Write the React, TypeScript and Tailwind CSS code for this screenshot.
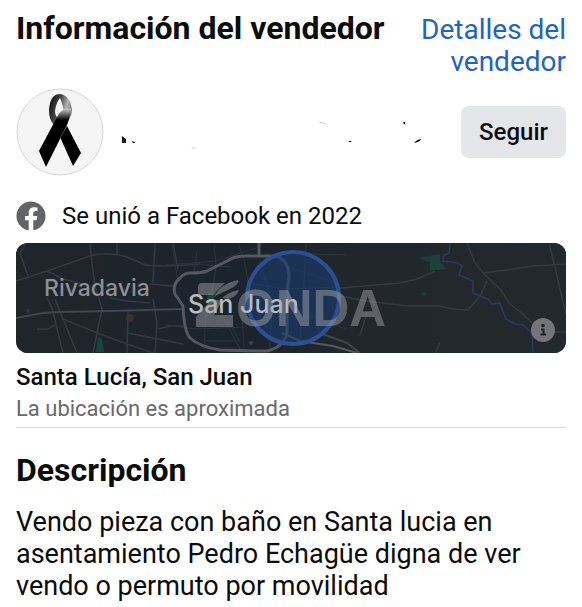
import type React from "react"
import { FaFacebook } from "react-icons/fa"

const minorRoads = [
  "M10 0L4 10L12 33",
  "M0 38L31 28L47 36L70 42",
  "M31 28L51 21L74 13Q89 8 111 14L127 21Q137 25 184 21",
  "M74 0L76 20L79 43L86 66L81 90L77 110",
  "M101 0V11",
  "M139 0L137 40",
  "M157 0L162 26",
  "M31 55L36 65L47 110",
  "M39 56L47 76L61 110",
  "M47 76L84 91L111 101L137 110",
  "M21 86L32 86L39 82",
  "M137 56L141 80L139 110",
  "M112 68L111 110",
  "M112 90L127 93L167 101",
  "M142 86L154 83H170",
  "M94 55L111 58L134 60",
  "M134 41L157 43",
  "M344 93L351 70",
  "M324 45L384 40L401 36L419 28",
  "M324 53L350 58L391 63H424L436 66L452 67L464 53L471 38",
  "M451 0L459 20L467 30L484 46L494 61L507 71L516 80",
  "M467 30L491 27L517 23L550 21",
  "M533 0L541 33L550 72",
  "M424 100L419 110",
  "M538 89H550",
]

const cityStreets = [
  "M156 0L162 40",
  "M181 8L178 32",
  "M198 0L200 24L196 50",
  "M222 0L228 16L236 60",
  "M164 20L215 24",
  "M150 22L200 18L240 5",
  "M150 82L180 86L230 84",
  "M190 68L188 106",
  "M204 66L212 84L224 106",
  "M226 70L228 106",
  "M188 98H224L212 78",
  "M243 16L256 60L254 106",
  "M232 40L270 46L324 44",
  "M260 20L320 40",
  "M290 0L288 40L284 96",
  "M270 10L330 12",
  "M240 74L300 74L330 86",
  "M304 50L302 90",
]

const VendorMap: React.FC = () => (
  <svg
    viewBox="0 0 550 110"
    preserveAspectRatio="xMidYMid slice"
    className="block h-auto w-full rounded-xl bg-[#20262b]"
    role="img"
    aria-label="Mapa de San Juan"
  >
    <defs>
      <linearGradient id="land" x1="0" x2="1">
        <stop offset="0" stopColor="#20252a" />
        <stop offset="0.4" stopColor="#1b232c" />
        <stop offset="0.65" stopColor="#22272b" />
        <stop offset="1" stopColor="#22282c" />
      </linearGradient>
    </defs>
    <rect width="550" height="110" fill="url(#land)" />
    <path d="M402 15L424 11L424 18L430 26L414 28L414 19Z" fill="#1b403d" />
    <path d="M82 94L86 96L88 109H80Z" fill="#174340" />
    <path d="M192 50H202L196 58L191 56Z" fill="#17483f" />
    <circle cx="114" cy="75" r="4" fill="#3b302b" />
    <circle cx="12" cy="68" r="2" fill="#174340" />
    <circle cx="408" cy="51" r="2" fill="#1b403d" />
    <circle cx="235" cy="100" r="2" fill="#17594a" />

    <g fill="none" stroke="#343a41" strokeWidth="1.5" strokeLinejoin="round">
      {minorRoads.map((d) => (
        <path key={d} d={d} />
      ))}
    </g>
    <g fill="none" stroke="#2c343e" strokeWidth="1">
      {cityStreets.map((d) => (
        <path key={d} d={d} />
      ))}
    </g>
    <path d="M0 75L27 70L44 69L94 68L166 66" fill="none" stroke="#3f464f" strokeWidth="2" />
    <path
      d="M434 0L433 10L427 13L427 18L442 20L446 23L443 32L457 38L457 50L472 56L476 61L484 60L490 76L499 81L507 82L516 90L517 110"
      fill="none"
      stroke="#2b3966"
      strokeWidth="1.5"
      strokeLinejoin="round"
    />

    <g fill="none" stroke="#535861" strokeWidth="3" strokeLinejoin="round">
      <path d="M243 0V12" />
      <path d="M261 13H230Q218 13 211 18L191 28Q186 30 174 30Q168 30 164 35Q156 42 159 51L167 63Q168 88 174 95Q184 104 204 107Q231 108 251 108Q268 104 271 90L272 40Q276 20 261 13Z" />
      <path d="M266 90L284 98L317 103L341 110" strokeWidth="2" />
      <path d="M304 90L331 100L344 110" stroke="#3f464f" strokeWidth="2" />
    </g>
    <circle cx="277" cy="55" r="46" fill="#1a3c72" fillOpacity="0.6" stroke="#2c4f93" strokeWidth="4" />

    <g fontFamily="Inter, sans-serif" fontWeight="500">
      <text x="28" y="53" fontSize="23" fill="#8d9094">
        Rivadavia
      </text>
      <text x="172" y="70" fontSize="25" fill="#b9bcc0">
        San Juan
      </text>
    </g>

    <g fill="#a9abb0" fillOpacity="0.45">
      <path d="M186 40H209L197 52H182V44Q182 40 186 40Z" />
      <path d="M199 53Q204 41 222 37Q224 41 214 46Z" />
      <path d="M206 55Q212 49 223 47Q221 54 212 56Z" />
      <path d="M196 56L206 58L198 72H217V84H180V74Z" />
      <text x="220" y="83" fontFamily="Liberation Sans, Arial, sans-serif" fontWeight="700" fontSize="51">
        ONDA
      </text>
    </g>

    <circle cx="527" cy="87" r="12" fill="#737578" />
    <circle cx="527" cy="82.5" r="1.8" fill="#202529" />
    <path d="M525 86.5H527.5V91M524.5 91.5H530" fill="none" stroke="#202529" strokeWidth="2" />
  </svg>
)

const RibbonAvatar: React.FC = () => (
  <svg viewBox="0 0 88 88" className="size-[88px] shrink-0" role="img" aria-label="Foto del vendedor">
    <defs>
      <linearGradient id="loop" x1="0" y1="0" x2="1" y2="0.4">
        <stop offset="0.1" stopColor="#111111" />
        <stop offset="0.5" stopColor="#4a4a4a" />
        <stop offset="0.8" stopColor="#b5b5b5" />
        <stop offset="1" stopColor="#7a7a7a" />
      </linearGradient>
      <linearGradient id="band" x1="0" y1="0" x2="0" y2="1">
        <stop offset="0" stopColor="#d0d0d0" />
        <stop offset="0.2" stopColor="#000000" />
      </linearGradient>
    </defs>
    <circle cx="44" cy="44" r="43" fill="#f5f5f5" stroke="#d6d6d6" />
    <path d="M33 22Q34 6 44 6Q54 7 56 22Q56 27 53 31L48 24Q46 14 44 10Q40 15 39 23Q39 28 42 30L38 37Q33 32 33 22Z" fill="url(#loop)" />
    <path d="M44 49L51 38L65 65L57 78Z" fill="#000000" />
    <path d="M55 21Q55 27 51 37L30 79L23 63L41 29Q47 18 55 21Z" fill="url(#band)" />
    <path d="M51 38L44 50" stroke="#777777" strokeWidth="0.5" />
  </svg>
)

// what is left of the hidden seller name
const NameTraces: React.FC = () => (
  <svg viewBox="0 0 358 40" preserveAspectRatio="xMinYMid meet" className="h-10 min-w-0 flex-1" aria-hidden="true">
    <g fill="#111111">
      <path d="M18 24L22 27V31H18Z" />
      <path d="M28 29L31 30V31H29Z" />
      <path d="M245 29H248V30H246Z" />
      <path d="M300 10H302V13L300 11Z" />
      <path d="M311 31Q313 28 318 27Q317 30 311 31Z" />
    </g>
    <path d="M216 10L223 12M88 36H92" stroke="#cccccc" />
  </svg>
)

const App: React.FC = () => {
  return (
    <main className="bg-white px-4 pt-3 font-[Roboto,sans-serif] text-[#0b0c0e]">
      <header className="flex items-start justify-between gap-4">
        <h1 className="text-[32px] leading-8 font-bold whitespace-nowrap">Información del vendedor</h1>
        <a href="#detalles" className="pt-0.5 text-right text-[28px] leading-8 text-[#2263bd]">
          Detalles del vendedor
        </a>
      </header>

      <section className="mt-2.5 flex items-center">
        <RibbonAvatar />
        <NameTraces />
        <button type="button" className="rounded-lg bg-[#e4e6ea] px-[18px] py-2.5 text-2xl font-medium">
          Seguir
        </button>
      </section>

      <p className="mt-6 flex items-center gap-4 text-2xl">
        <FaFacebook className="size-[30px] text-[#636467]" aria-hidden="true" />
        Se unió a Facebook en 2022
      </p>

      <section className="mt-[11px] border-b border-[#dcdddf] pb-0.5">
        <VendorMap />
        <h2 className="mt-2 text-2xl font-medium">Santa Lucía, San Juan</h2>
        <p className="text-[22px] leading-8 text-[#68696c]">La ubicación es aproximada</p>
      </section>

      <section className="mt-6">
        <h2 className="text-[32px] leading-9 font-bold">Descripción</h2>
        <p className="mt-[18px] text-[27px] leading-8">
          Vendo pieza con baño en Santa lucia en asentamiento Pedro Echagüe digna de ver vendo o permuto por movilidad
        </p>
      </section>
    </main>
  )
}

export default App
